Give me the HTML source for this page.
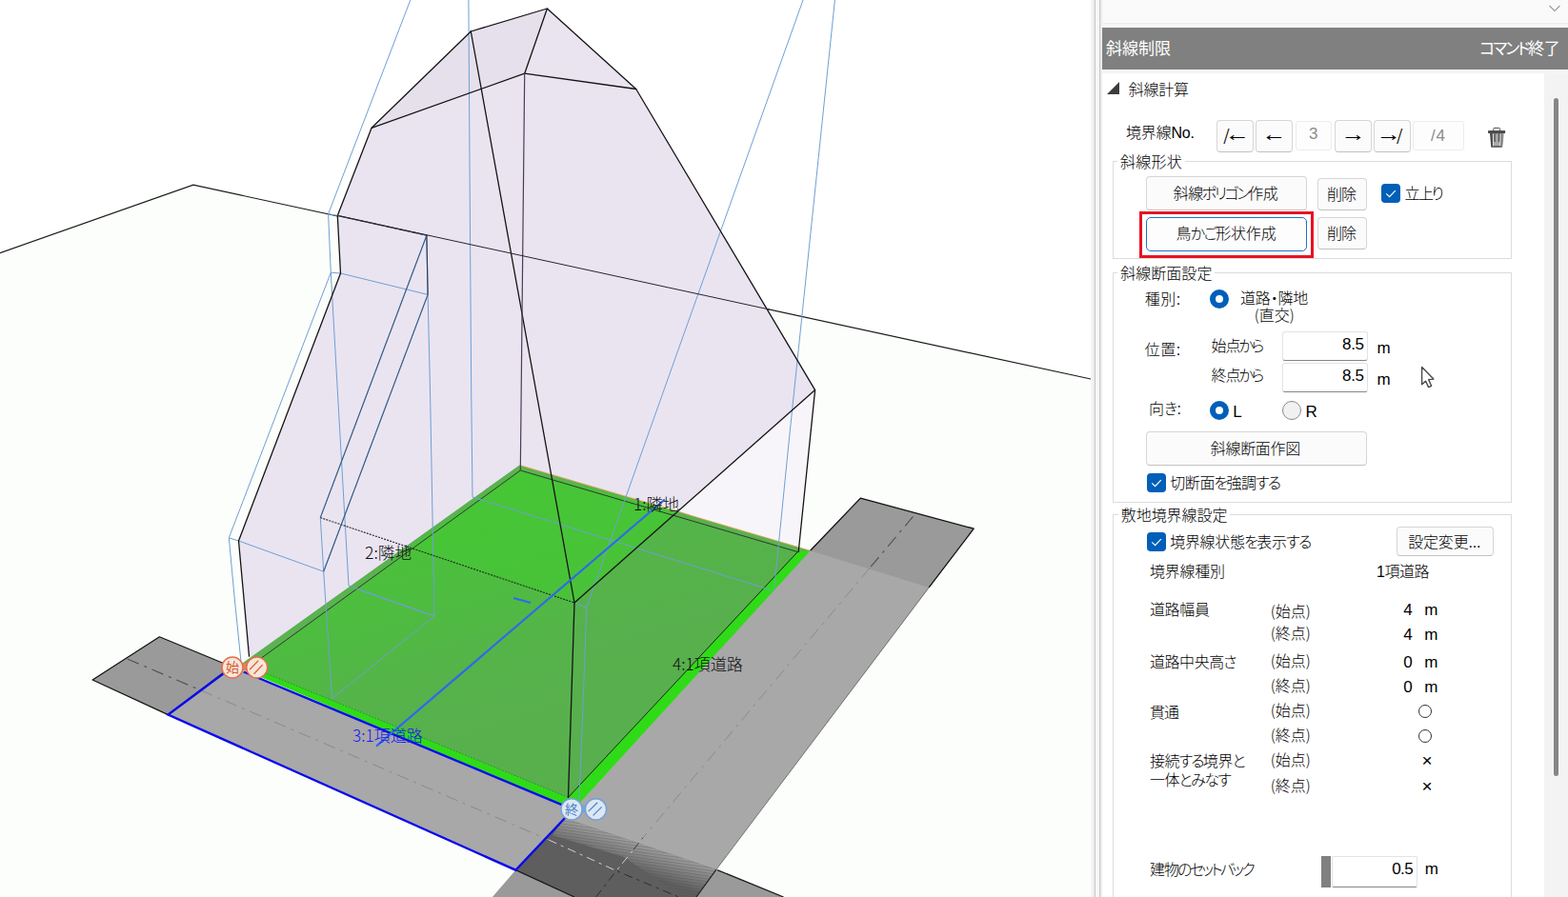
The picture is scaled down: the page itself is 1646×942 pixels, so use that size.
<!DOCTYPE html>
<html lang="ja"><head><meta charset="utf-8"><title>斜線制限</title>
<style>
html,body{margin:0;padding:0;}
body{width:1646px;height:942px;overflow:hidden;position:relative;background:#fff;font-family:"Liberation Sans","Noto Sans CJK JP",sans-serif;font-size:16px;color:#000;}
.a{position:absolute;}
.t{position:absolute;white-space:nowrap;line-height:24px;height:24px;font-weight:300;}
.l{font-weight:400;font-size:17px;}
.btn{position:absolute;box-sizing:border-box;background:#fbfbfb;border:1px solid #d6d6d6;border-bottom-color:#c2c2c2;border-radius:4px;}
.fld{position:absolute;box-sizing:border-box;background:#fdfdfd;border:1px solid #ececec;border-radius:3px;}
.inp{position:absolute;box-sizing:border-box;background:#fff;border:1px solid #e3e3e3;border-bottom:1px solid #868686;border-radius:3px;}
.grp{position:absolute;box-sizing:border-box;border:1px solid #dcdcdc;}
.cb{position:absolute;width:20px;height:20px;border-radius:4px;background:#005fb8;}
.rd{position:absolute;width:20px;height:20px;border-radius:50%;box-sizing:border-box;}
.rd.on{border:6px solid #005fb8;background:#fff;}
.rd.off{border:1px solid #8a8a8a;background:#f1f1f1;}
</style></head><body>
<svg id="vp" width="1145" height="942" viewBox="0 0 1145 942" style="position:absolute;left:0;top:0;">
<defs>
<linearGradient id="gdull" gradientUnits="userSpaceOnUse" x1="520" y1="500" x2="590" y2="740">
<stop offset="0" stop-color="#48c437"/><stop offset="0.4" stop-color="#4dbd3f"/><stop offset="0.8" stop-color="#56b24b"/><stop offset="1" stop-color="#58b04d"/></linearGradient>
<linearGradient id="ghatch" gradientUnits="userSpaceOnUse" x1="672" y1="886" x2="662.6" y2="914.5">
<stop offset="0" stop-color="#a0a0a0"/><stop offset="0.5" stop-color="#808080"/><stop offset="1" stop-color="#5e5e5e"/></linearGradient>
<pattern id="stripes" patternUnits="userSpaceOnUse" width="40" height="3" patternTransform="rotate(8)">
<rect x="0" y="0" width="40" height="1.2" fill="#505050" fill-opacity="0.35"/></pattern>
</defs>
<rect width="1145" height="942" fill="#ffffff"/>
<!-- ground plane -->
<polygon points="0,265.6 202.9,194.2 1145,398 1145,942 0,942" fill="#fcfefb"/>
<polyline points="0,265.6 202.9,194.2 1145,398" fill="none" stroke="#1a1a1a" stroke-width="1.2"/>
<!-- roads -->
<polygon points="167.4,668.8 97.1,714 176.5,750.6 243,700" fill="#9a9a9a" stroke="#111" stroke-width="1.2" stroke-linejoin="round"/>
<polygon points="243,700 176.5,750.6 541.3,913.7 560,905 600,862 606,846" fill="#a8a8a8"/>
<polygon points="856,572 980,611 751.9,913.2 740,920 590,866 606,846" fill="#a8a8a8"/>
<polygon points="903.3,523.1 1022.2,555.2 975.2,616.9 850.6,578.3" fill="#9a9a9a"/>
<polyline points="850.6,578.3 903.3,523.1 1022.2,555.2 975.2,616.9" fill="none" stroke="#111" stroke-width="1.3" stroke-linejoin="round"/>
<polyline points="975.2,616.9 751.9,913.2" fill="none" stroke="#6a6a6a" stroke-width="0.9"/>
<!-- intersection -->
<polygon points="541.3,913.7 516.9,942 605,942" fill="#9a9a9a"/>
<polygon points="751.9,913.2 822.5,942 729,942" fill="#9a9a9a"/>
<polygon points="592.7,859.3 751.9,913.2 731,942 603,942 541.3,913.7" fill="#5e5e5e"/>
<polygon points="592.7,859.3 751.9,913.2 731,942 716,942 655,900 580,877" fill="url(#ghatch)"/>
<polygon points="592.7,859.3 751.9,913.2 731,942 716,942 655,900 580,877" fill="url(#stripes)"/>
<polyline points="541.3,913.7 603,942" fill="none" stroke="#1a1a1a" stroke-width="1.3"/>
<polyline points="753,913.6 822.5,942" fill="none" stroke="#1a1a1a" stroke-width="1.3"/>
<polyline points="751.9,913.2 731,942" fill="none" stroke="#222" stroke-width="1.2"/>
<!-- road centre lines -->
<line x1="133.7" y1="692" x2="211" y2="725" stroke="#555" stroke-width="1.2" stroke-dasharray="13 6 3 6"/>
<line x1="211" y1="725" x2="576" y2="882" stroke="#8a8a8a" stroke-width="1" stroke-dasharray="13 6 3 6"/>
<line x1="958.5" y1="542.4" x2="913" y2="596.5" stroke="#555" stroke-width="1.2" stroke-dasharray="13 6 3 6"/>
<line x1="913" y1="596.5" x2="674.9" y2="879.8" stroke="#8a8a8a" stroke-width="1" stroke-dasharray="13 6 3 6"/>
<polyline points="576,882 647,914.5 665,892.3" fill="none" stroke="#d0d0d0" stroke-width="1" stroke-dasharray="9 5 3 5"/>
<polyline points="665,892.3 674.9,879.8" fill="none" stroke="#3c3c3c" stroke-width="1" stroke-dasharray="9 5"/>
<polyline points="625.6,942 647,914.5 712.6,942" fill="none" stroke="#2e2e2e" stroke-width="1" stroke-dasharray="9 5 3 5"/>
<!-- volume silhouette -->
<polygon points="574.4,9 667.7,93.5 855.6,409.6 712.5,536.8 838,580 600,840 261.5,689.1 250.5,568 357.5,287 354.3,226.4 390.1,134.3 494.3,33" fill="#eae4f1"/>
<polygon points="855.6,409.6 838.2,579.5 712.5,536.8" fill="#f8f5fa"/>
<polygon points="494.3,33 574.4,9 550.7,77.2 390.1,134.3" fill="#e6e0ed"/>
<!-- site -->
<polygon points="545.3,488.4 850.6,578.3 606,846 250,699.5" fill="#5bb250"/>
<polygon points="546.3,494 837.3,579.6 596.5,837.4 262,700" fill="url(#gdull)"/>
<polygon points="712.5,536.8 837.3,579.6 596.5,837.4 603,633" fill="#59af4f" fill-opacity="0.6"/>
<polygon points="546.3,494 712.5,536.8 603,633 429,575" fill="#46c634" fill-opacity="0.7"/>
<!-- bright green strips -->
<polygon points="256,697 596.5,837.4 606,846 597,848 250,701" fill="#2fdb17"/>
<polygon points="596.5,837.4 837.3,579.6 850.6,578.3 606,846" fill="#2fdb17"/>
<line x1="545.3" y1="488.4" x2="850.6" y2="578.3" stroke="#e8a050" stroke-width="0.8"/>
<!-- inner site line (black) -->
<polyline points="262,700 546.3,494 837.3,579.6" fill="none" stroke="#2c3a2c" stroke-width="1"/>
<polyline points="837.3,579.6 596.5,837.4" fill="none" stroke="#1c241c" stroke-width="1"/>
<!-- front dotted edge -->
<line x1="262" y1="700" x2="596.5" y2="837.4" stroke="#3f6f50" stroke-width="0.9" stroke-dasharray="1.5 1.8"/>
<!-- blue road outline -->
<polyline points="255.8,705.5 592.7,846.4" fill="none" stroke="#0a0aee" stroke-width="2.4"/>
<polyline points="243,701 176.5,750.6 541.3,913.7 594,858" fill="none" stroke="#0a0aee" stroke-width="2.4" stroke-linejoin="miter"/>
<!-- thin cage lines -->
<g fill="none" stroke="#6f9fd2" stroke-width="1">
<polyline points="430.8,0 344.6,224.7 347.3,286.2 240.3,564.8 246.4,630 253,695"/>
<polyline points="344.6,224.7 354.3,226.4"/>
<polyline points="347.3,286.2 357.5,287 449.1,309.4"/>
<polyline points="347.3,286.2 354.3,410 366,615"/>
<polyline points="447.9,247.2 336.3,543.6 339.7,600.2 348.6,733.6"/>
<polyline points="449.1,309.4 339.7,600.2"/>
<polyline points="240.3,564.8 250.5,568 339.7,600.2"/>
<polyline points="447.9,247.2 449.1,309.4 451.5,410 456,647"/>
<polyline points="491.9,0 493.4,230 494.7,410 496,522 810,619.8"/>
<polyline points="876.4,0 855.6,200 828,465 812.6,619.8"/>
<polyline points="843,0 700,401 615.7,638 613.5,700 608,843"/>
<polyline points="603,633 615.7,638"/>
<polyline points="366,615 456,647 348.6,733.6"/>
<polyline points="378,620 456,647"/>
</g>
<!-- volume edges -->
<g fill="none" stroke="#141414" stroke-width="1.3" stroke-linejoin="round" stroke-linecap="round">
<polyline points="494.3,33 574.4,9 667.7,93.5 855.6,409.6 838.2,579.5"/>
<polyline points="574.4,9 550.7,77.2 667.7,93.5"/>
<polyline points="550.7,77.2 390.1,134.3"/>
<polyline points="494.3,33 390.1,134.3 354.3,226.4 357.5,287 250.5,568 261.5,689.1"/>
<polyline points="494.3,33 603,633 596.5,837.4"/>
<polyline points="855.6,409.6 603,633"/>
<polyline points="354.3,226.4 447.9,247.2"/>
</g>
<line x1="550.7" y1="77.2" x2="546.3" y2="494" stroke="#4a3c58" stroke-width="1.2"/>
<line x1="336.3" y1="543.6" x2="603" y2="633" stroke="#222" stroke-width="1.1" stroke-dasharray="2 1.2"/>
<line x1="354.3" y1="226.4" x2="447.9" y2="247.2" stroke="#6f9fd2" stroke-width="1" stroke-dasharray="4 3"/>
<line x1="447.9" y1="247.2" x2="336.3" y2="543.6" stroke="#3c5c80" stroke-width="1.1"/>
<line x1="447.9" y1="247.2" x2="449.1" y2="309.4" stroke="#2c3c58" stroke-width="1.2"/>
<line x1="449.1" y1="309.4" x2="339.7" y2="600.2" stroke="#3c5c80" stroke-width="1.1"/>
<!-- ground plane line over volume -->
<line x1="354.3" y1="226.4" x2="808" y2="325.1" stroke="#2a2230" stroke-width="1"/>
<!-- section line -->
<line x1="697.8" y1="524.5" x2="395" y2="783.6" stroke="#3068ee" stroke-width="2.2"/>
<line x1="539" y1="628" x2="557" y2="633" stroke="#3068ee" stroke-width="2.2"/>
<!-- labels -->
<g font-family="'Noto Sans CJK JP','Liberation Sans',sans-serif" font-size="17.5" font-weight="300">
<text x="665" y="536" fill="#111" textLength="48" lengthAdjust="spacingAndGlyphs">1:隣地</text>
<text x="383" y="587" fill="#111" textLength="49" lengthAdjust="spacingAndGlyphs">2:隣地</text>
<text x="370" y="779" fill="#1a1aee" textLength="74" lengthAdjust="spacingAndGlyphs">3:1項道路</text>
<text x="706" y="704" fill="#111" textLength="74" lengthAdjust="spacingAndGlyphs">4:1項道路</text>
</g>
<!-- start / end markers -->
<g>
<rect x="253" y="696.5" width="8" height="8" fill="#e8825e"/>
<circle cx="244" cy="701" r="11" fill="#f6e6da" stroke="#e2704a" stroke-width="1.5"/>
<circle cx="269.7" cy="701" r="11" fill="#f6e6da" stroke="#e2704a" stroke-width="1.5"/>
<text x="244" y="706" text-anchor="middle" font-family="'Liberation Sans','Noto Sans CJK JP',sans-serif" font-size="14" fill="#da5a32">始</text>
<path d="M262,703.2 L271.2,693.8 M266.5,707.7 L275.6,698.3" stroke="#e0623a" stroke-width="1.3" fill="none"/>
<rect x="609" y="845.5" width="8" height="8" fill="#7aa4d6"/>
<circle cx="600" cy="849.9" r="11.1" fill="#dce7f3" stroke="#74a0d4" stroke-width="1.5"/>
<circle cx="625.5" cy="849.9" r="11.1" fill="#dce7f3" stroke="#74a0d4" stroke-width="1.5"/>
<text x="600" y="854.9" text-anchor="middle" font-family="'Liberation Sans','Noto Sans CJK JP',sans-serif" font-size="14" fill="#4a80c4">終</text>
<path d="M617.7,852.1 L627.2,842.8 M622.6,856.4 L631.7,847.4" stroke="#4a86cc" stroke-width="1.3" fill="none"/>
</g>
</svg>
<!-- splitter -->
<div class="a" style="left:1145px;top:0;width:12px;height:942px;background:linear-gradient(90deg,#f2f2f2 0px,#f2f2f2 1px,#f7f7f7 1px,#f7f7f7 2px,#ededed 2px,#ededed 3px,#ececec 3px,#ececec 4px,#c8c8c8 4px,#c8c8c8 5px,#f7f7f7 5px,#f7f7f7 6px,#f7f7f7 6px,#f7f7f7 7px,#f7f7f7 7px,#f7f7f7 8px,#f7f7f7 8px,#f7f7f7 9px,#c9c9c9 9px,#c9c9c9 10px,#e8e8e8 10px,#e8e8e8 11px,#efefef 11px,#efefef 12px);"></div>
<!-- panel bg -->
<div class="a" style="left:1157px;top:0;width:489px;height:942px;background:#f5f5f5;"></div>
<div class="a" style="left:1158px;top:0;width:488px;height:24px;background:#fafafa;border-bottom:1px solid #ebebeb;"></div>
<svg class="a" style="left:1624px;top:3px" width="16" height="12" viewBox="0 0 16 12"><path d="M2.5,3 L8,8.5 L13.5,3" fill="none" stroke="#9a9a9a" stroke-width="1.1"/></svg>
<div class="a" style="left:1157px;top:29px;width:489px;height:44px;background:#808080;"></div>
<div class="a" style="left:1157px;top:77px;width:464px;height:865px;background:#fff;"></div>
<div class="a" style="left:1621px;top:77px;width:25px;height:865px;background:#f3f3f3;"></div>
<div class="a" style="left:1631px;top:103px;width:5px;height:712px;background:#868686;border-radius:3px;"></div>
<!-- expander triangle -->
<svg class="a" style="left:1162px;top:86px" width="14" height="13" viewBox="0 0 14 13"><path d="M13,0 L13,13 L0,13 Z" fill="#3c3c3c"/></svg>
<!-- nav buttons -->
<div class="btn" style="left:1277px;top:126px;width:39px;height:34px;"></div>
<div class="btn" style="left:1318px;top:126px;width:39px;height:34px;"></div>
<div class="fld" style="left:1360px;top:127px;width:38px;height:31px;"></div>
<div class="btn" style="left:1401px;top:126px;width:39px;height:34px;"></div>
<div class="btn" style="left:1442px;top:126px;width:39px;height:34px;"></div>
<div class="fld" style="left:1483px;top:127px;width:54px;height:31px;"></div>
<!-- trash -->
<svg class="a" style="left:1560px;top:132px" width="24" height="26" viewBox="1560 132 24 26">
<defs><linearGradient id="tg" x1="0" y1="0" x2="1" y2="0"><stop offset="0" stop-color="#4a4a4a"/><stop offset="0.72" stop-color="#4c4c4c"/><stop offset="0.86" stop-color="#8a8a8a"/><stop offset="1" stop-color="#d8d8d8"/></linearGradient></defs>
<rect x="1567.7" y="134.4" width="7" height="4" rx="1.2" fill="none" stroke="#4d4d4d" stroke-width="1"/>
<rect x="1562.1" y="137.1" width="18" height="2.9" fill="#4a4a4a"/>
<path d="M1564,140 L1579.2,140 L1577.2,154.7 L1565.3,154.7 Z" fill="url(#tg)"/>
<path d="M1567,140.3 L1575.5,140.3 L1575.1,153.2 L1567.3,153.2 Z" fill="#a9a9a9"/>
<path d="M1567.3,140.3 L1567.6,153.2 M1575.2,140.3 L1574.9,153.2" stroke="#ececec" stroke-width="0.9" fill="none"/>
<path d="M1569,140.3 L1569.2,149 M1573.6,140.3 L1573.4,149" stroke="#5a5a5a" stroke-width="1.5" fill="none"/>
</svg>
<!-- group 1 -->
<div class="grp" style="left:1168px;top:169px;width:419px;height:103px;"></div>
<div class="btn" style="left:1203px;top:185px;width:169px;height:36px;"></div>
<div class="btn" style="left:1383px;top:187px;width:52px;height:34px;"></div>
<div class="cb" style="left:1450px;top:193px;"></div>
<svg class="a" style="left:1450px;top:193px" width="20" height="20" viewBox="0 0 20 20"><path d="M5.2,10.4 L8.6,13.6 L14.8,7.2" fill="none" stroke="#fff" stroke-width="1.2"/></svg>
<div class="a" style="left:1196px;top:222px;width:183px;height:49px;box-sizing:border-box;border:3px solid #e81224;"></div>
<div class="btn" style="left:1203px;top:228px;width:169px;height:36px;border:1.5px solid #1a73c8;background:#fdfdfd;border-radius:5px;"></div>
<div class="btn" style="left:1383px;top:228px;width:52px;height:34px;"></div>
<!-- group 2 -->
<div class="grp" style="left:1168px;top:286px;width:419px;height:242px;"></div>
<div class="rd on" style="left:1270px;top:304px;"></div>
<div class="inp" style="left:1346px;top:348px;width:89.5px;height:30.5px;"></div>
<div class="inp" style="left:1346px;top:381px;width:89.5px;height:30.5px;"></div>
<div class="rd on" style="left:1270px;top:421px;"></div>
<div class="rd off" style="left:1346px;top:421px;"></div>
<div class="btn" style="left:1203px;top:453px;width:232px;height:36px;"></div>
<div class="cb" style="left:1204px;top:497px;"></div>
<svg class="a" style="left:1204px;top:497px" width="20" height="20" viewBox="0 0 20 20"><path d="M5.2,10.4 L8.6,13.6 L14.8,7.2" fill="none" stroke="#fff" stroke-width="1.2"/></svg>
<!-- mouse cursor -->
<svg class="a" style="left:1488px;top:382px" width="22" height="28" viewBox="1488 382 22 28"><path d="M1492.6,385.6 L1492.6,403.8 L1496.6,400.2 L1499.6,406.6 L1502.6,405.3 L1499.7,398.6 L1504.9,398.1 Z" fill="#fff" stroke="#484848" stroke-width="1.4" stroke-linejoin="round"/></svg>
<!-- group 3 -->
<div class="grp" style="left:1168px;top:540px;width:419px;height:420px;"></div>
<div class="cb" style="left:1204px;top:559px;"></div>
<svg class="a" style="left:1204px;top:559px" width="20" height="20" viewBox="0 0 20 20"><path d="M5.2,10.4 L8.6,13.6 L14.8,7.2" fill="none" stroke="#fff" stroke-width="1.2"/></svg>
<div class="btn" style="left:1466px;top:553px;width:102px;height:31px;"></div>
<div class="a" style="left:1488.8px;top:740.1px;width:14.2px;height:14.2px;box-sizing:border-box;border:1px solid #333;border-radius:50%;"></div>
<div class="a" style="left:1488.8px;top:765.8px;width:14.2px;height:14.2px;box-sizing:border-box;border:1px solid #333;border-radius:50%;"></div>
<div class="a" style="left:1387px;top:899px;width:10px;height:33px;background:#808080;"></div>
<div class="inp" style="left:1398px;top:899px;width:90px;height:33px;border-radius:2px;"></div>
<span class="t" style="left:1161.0px;top:40.4px;color:#fff;font-size:17px;font-weight:400;">斜線制限</span>
<span class="t" style="left:1554.0px;top:39.8px;font-feature-settings:'palt';letter-spacing:-0.66px;color:#fff;font-size:17px;font-weight:400;"><span style="letter-spacing:-2.20px;margin-left:-0.77px">コマンド</span>終了</span>
<span class="t" style="left:1184.8px;top:82.9px;letter-spacing:-0.26px;">斜線計算</span>
<span class="t" style="left:1182.0px;top:127.5px;letter-spacing:-0.18px;">境界線No.</span>
<span class="t l" style="left:1284.3px;top:131.0px;font-size:21px;"><span style="font-family:'Noto Sans CJK JP',sans-serif;font-weight:400;font-size:16.5px;position:relative;top:-1.6px">/</span><span style="display:inline-block;transform:scaleX(1.25);transform-origin:0 50%;position:relative;top:-2px;margin-left:-4.5px">←</span></span>
<span class="t l" style="left:1326.5px;top:131.0px;font-size:21px;"><span style="display:inline-block;transform:scaleX(1.25);transform-origin:50% 50%;position:relative;top:-2px;">←</span></span>
<span class="t l" style="left:1374.1px;top:129.2px;color:#8c8c8c;">3</span>
<span class="t l" style="left:1409.5px;top:131.0px;font-size:21px;"><span style="display:inline-block;transform:scaleX(1.25);transform-origin:50% 50%;position:relative;top:-2px;">→</span></span>
<span class="t l" style="left:1450.2px;top:131.0px;font-size:21px;"><span style="display:inline-block;transform:scaleX(1.25);transform-origin:100% 50%;position:relative;top:-2px;margin-right:-5.3px">→</span><span style="font-family:'Noto Sans CJK JP',sans-serif;font-weight:400;font-size:16.5px;position:relative;top:-1.6px">/</span></span>
<span class="t l" style="left:1502.0px;top:131.4px;letter-spacing:0.81px;color:#8c8c8c;">/4</span>
<span class="t" style="left:1176.0px;top:159.0px;letter-spacing:0.24px;background:#fff;padding:0 3px;margin-left:-3px;">斜線形状</span>
<span class="t" style="left:1231.8px;top:191.7px;font-feature-settings:'palt';letter-spacing:-0.55px;">斜線<span style="letter-spacing:-2.32px;margin-left:-0.89px">ポリゴン</span>作成</span>
<span class="t" style="left:1392.9px;top:192.6px;letter-spacing:-0.91px;">削除</span>
<span class="t" style="left:1474.5px;top:192.2px;font-feature-settings:'palt';letter-spacing:-1.45px;">立上<span style="letter-spacing:-3.92px;margin-left:-1.23px">り</span></span>
<span class="t" style="left:1234.6px;top:234.4px;font-feature-settings:'palt';letter-spacing:-0.20px;">鳥<span style="letter-spacing:-1.55px;margin-left:-0.67px">かご</span>形状作成</span>
<span class="t" style="left:1392.9px;top:234.1px;letter-spacing:-0.91px;">削除</span>
<span class="t" style="left:1176.2px;top:276.0px;letter-spacing:0.04px;background:#fff;padding:0 3px;margin-left:-3px;">斜線断面設定</span>
<span class="t" style="left:1201.7px;top:303.4px;letter-spacing:0.52px;">種別:</span>
<span class="t" style="left:1301.9px;top:301.6px;font-feature-settings:'palt';letter-spacing:-0.02px;">道路<span style="letter-spacing:-0.33px;margin-left:-0.15px">・</span>隣地</span>
<span class="t" style="left:1316.8px;top:318.1px;letter-spacing:-0.03px;font-family:'Noto Sans CJK JP','Liberation Sans',sans-serif;">(直交)</span>
<span class="t" style="left:1201.7px;top:355.7px;letter-spacing:0.52px;">位置:</span>
<span class="t" style="left:1271.5px;top:351.7px;font-feature-settings:'palt';letter-spacing:-1.03px;">始点<span style="letter-spacing:-2.70px;margin-left:-0.84px">から</span></span>
<span class="t" style="left:1271.5px;top:383.2px;font-feature-settings:'palt';letter-spacing:-1.03px;">終点<span style="letter-spacing:-2.70px;margin-left:-0.84px">から</span></span>
<span class="t l" style="left:1409.1px;top:350.4px;letter-spacing:-0.37px;">8.5</span>
<span class="t l" style="left:1445.4px;top:354.1px;">m</span>
<span class="t l" style="left:1409.1px;top:383.2px;letter-spacing:-0.37px;">8.5</span>
<span class="t l" style="left:1445.4px;top:386.9px;">m</span>
<span class="t" style="left:1206.1px;top:418.3px;font-feature-settings:'palt';letter-spacing:-0.04px;">向<span style="letter-spacing:-0.36px;margin-left:-0.16px">き</span>:</span>
<span class="t l" style="left:1294.2px;top:420.7px;">L</span>
<span class="t l" style="left:1370.6px;top:420.7px;">R</span>
<span class="t" style="left:1270.7px;top:460.1px;letter-spacing:-0.28px;">斜線断面作図</span>
<span class="t" style="left:1228.2px;top:495.9px;font-feature-settings:'palt';letter-spacing:-0.39px;">切断面<span style="letter-spacing:-1.73px;margin-left:-0.67px">を</span>強調<span style="letter-spacing:-1.73px;margin-left:-0.67px">する</span></span>
<span class="t" style="left:1176.7px;top:530.3px;letter-spacing:-0.03px;background:#fff;padding:0 3px;margin-left:-3px;">敷地境界線設定</span>
<span class="t" style="left:1228.2px;top:558.1px;font-feature-settings:'palt';letter-spacing:-0.29px;">境界線状態<span style="letter-spacing:-1.57px;margin-left:-0.64px">を</span>表示<span style="letter-spacing:-1.57px;margin-left:-0.64px">する</span></span>
<span class="t" style="left:1478.2px;top:557.8px;letter-spacing:-0.16px;">設定変更...</span>
<span class="t" style="left:1206.9px;top:588.8px;letter-spacing:-0.20px;">境界線種別</span>
<span class="t" style="left:1445.1px;top:588.8px;letter-spacing:-0.50px;">1項道路</span>
<span class="t" style="left:1206.9px;top:629.2px;letter-spacing:-0.33px;">道路幅員</span>
<span class="t" style="left:1333.8px;top:628.9px;letter-spacing:-0.03px;font-family:'Noto Sans CJK JP','Liberation Sans',sans-serif;">(始点)</span>
<span class="t" style="left:1333.8px;top:651.8px;letter-spacing:-0.03px;font-family:'Noto Sans CJK JP','Liberation Sans',sans-serif;">(終点)</span>
<span class="t" style="left:1333.8px;top:680.8px;letter-spacing:-0.03px;font-family:'Noto Sans CJK JP','Liberation Sans',sans-serif;">(始点)</span>
<span class="t" style="left:1333.8px;top:706.9px;letter-spacing:-0.03px;font-family:'Noto Sans CJK JP','Liberation Sans',sans-serif;">(終点)</span>
<span class="t" style="left:1333.8px;top:733.1px;letter-spacing:-0.03px;font-family:'Noto Sans CJK JP','Liberation Sans',sans-serif;">(始点)</span>
<span class="t" style="left:1333.8px;top:758.8px;letter-spacing:-0.03px;font-family:'Noto Sans CJK JP','Liberation Sans',sans-serif;">(終点)</span>
<span class="t" style="left:1333.8px;top:785.0px;letter-spacing:-0.03px;font-family:'Noto Sans CJK JP','Liberation Sans',sans-serif;">(始点)</span>
<span class="t" style="left:1333.8px;top:812.4px;letter-spacing:-0.03px;font-family:'Noto Sans CJK JP','Liberation Sans',sans-serif;">(終点)</span>
<span class="t l" style="left:1473.2px;top:629.0px;">4</span>
<span class="t l" style="left:1495.3px;top:629.0px;">m</span>
<span class="t l" style="left:1473.2px;top:655.1px;">4</span>
<span class="t l" style="left:1495.3px;top:655.1px;">m</span>
<span class="t l" style="left:1473.2px;top:683.6px;">0</span>
<span class="t l" style="left:1495.3px;top:683.6px;">m</span>
<span class="t l" style="left:1473.2px;top:710.1px;">0</span>
<span class="t l" style="left:1495.3px;top:710.1px;">m</span>
<span class="t" style="left:1206.9px;top:683.7px;font-feature-settings:'palt';letter-spacing:-0.40px;">道路中央高<span style="letter-spacing:-2.12px;margin-left:-0.86px">さ</span></span>
<span class="t" style="left:1206.9px;top:736.9px;letter-spacing:-0.91px;">貫通</span>
<span class="t" style="left:1207.0px;top:787.6px;font-feature-settings:'palt';letter-spacing:-0.44px;">接続<span style="letter-spacing:-1.73px;margin-left:-0.64px">する</span>境界<span style="letter-spacing:-1.73px;margin-left:-0.64px">と</span></span>
<span class="t" style="left:1207.0px;top:807.6px;font-feature-settings:'palt';letter-spacing:-0.58px;">一体<span style="letter-spacing:-1.50px;margin-left:-0.46px">とみなす</span></span>
<span class="t l" style="left:1492.6px;top:787.4px;font-size:19px;">×</span>
<span class="t l" style="left:1492.6px;top:814.2px;font-size:19px;">×</span>
<span class="t" style="left:1207.0px;top:902.0px;font-feature-settings:'palt';letter-spacing:-1.05px;">建物<span style="letter-spacing:-2.67px;margin-left:-0.81px">のセットバック</span></span>
<span class="t l" style="left:1461.2px;top:900.5px;letter-spacing:-0.57px;">0.5</span>
<span class="t l" style="left:1495.7px;top:901.4px;">m</span>
</body></html>
